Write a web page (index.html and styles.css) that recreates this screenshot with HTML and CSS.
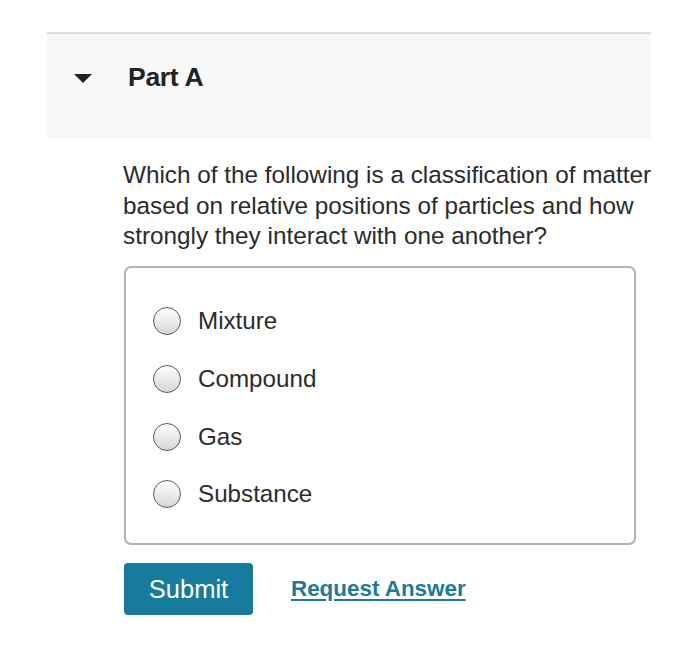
FILE: index.html
```html
<!DOCTYPE html>
<html>
<head>
<meta charset="utf-8">
<link rel="stylesheet" href="styles.css">
</head>
<body>
<div class="part">
  <div class="part-header">
    <span class="caret"></span>
    <h2 class="part-title">Part A</h2>
  </div>
  <div class="part-body">
    <p class="question">Which of the following is a classification of matter<br>based on relative positions of particles and how<br>strongly they interact with one another?</p>
    <div class="choices">
      <label class="choice"><span class="radio"></span><span class="choice-text">Mixture</span></label>
      <label class="choice"><span class="radio"></span><span class="choice-text">Compound</span></label>
      <label class="choice"><span class="radio"></span><span class="choice-text">Gas</span></label>
      <label class="choice"><span class="radio"></span><span class="choice-text">Substance</span></label>
    </div>
    <div class="actions">
      <button class="submit">Submit</button>
      <a class="request" href="#">Request Answer</a>
    </div>
  </div>
</div>
</body>
</html>
```

FILE: styles.css
```css
html, body {
  margin: 0;
  padding: 0;
  background: #ffffff;
}
body {
  font-family: "Liberation Sans", Arial, sans-serif;
  color: #2b2b2b;
}
.part {
  margin: 32px 0 0 47px;
  width: 604px;
}
.part-header {
  border-top: 2px solid #dedede;
  background: #f8f8f8;
  height: 107px;
  display: flex;
  align-items: center;
  padding: 0 0 18px 27px;
  box-sizing: border-box;
}
.caret {
  width: 0;
  height: 0;
  border-left: 9px solid transparent;
  border-right: 9px solid transparent;
  border-top: 9px solid #222;
  margin-top: 1px;
}
.part-title {
  margin: 0 0 0 36px;
  font-size: 26.5px;
  font-weight: bold;
  color: #222;
  letter-spacing: -0.3px;
}
.part-body {
  padding: 21px 0 0 76px;
}
.question {
  margin: 0;
  font-size: 24.3px;
  line-height: 30.5px;
  color: #2b2b2b;
  white-space: nowrap;
}
.choices {
  margin-top: 14px;
  margin-left: 1px;
  width: 512px;
  box-sizing: border-box;
  border: 2px solid #b3b3b3;
  border-radius: 7px;
  padding: 25px 0 20px 27px;
  display: flex;
  flex-direction: column;
}
.choice {
  height: 57.7px;
  display: flex;
  align-items: center;
}
.radio {
  width: 28px;
  height: 28px;
  border-radius: 50%;
  border: 1.5px solid #5a5a5a;
  background: linear-gradient(#ffffff, #d6d6d6);
  box-sizing: border-box;
  flex: none;
}
.choice-text {
  margin-left: 17px;
  font-size: 24.2px;
  color: #2b2b2b;
}
.actions {
  margin-top: 18px;
  margin-left: 1px;
  display: flex;
  align-items: center;
}
.submit {
  width: 129px;
  height: 52px;
  border: none;
  border-radius: 4px;
  background: #177b9d;
  color: #ffffff;
  font-family: "Liberation Sans", Arial, sans-serif;
  font-size: 25.5px;
  padding: 0;
}
.request {
  margin-left: 38px;
  font-size: 22.4px;
  font-weight: bold;
  color: #1a7a9c;
  text-decoration: underline;
  text-underline-offset: 3px;
}
```
